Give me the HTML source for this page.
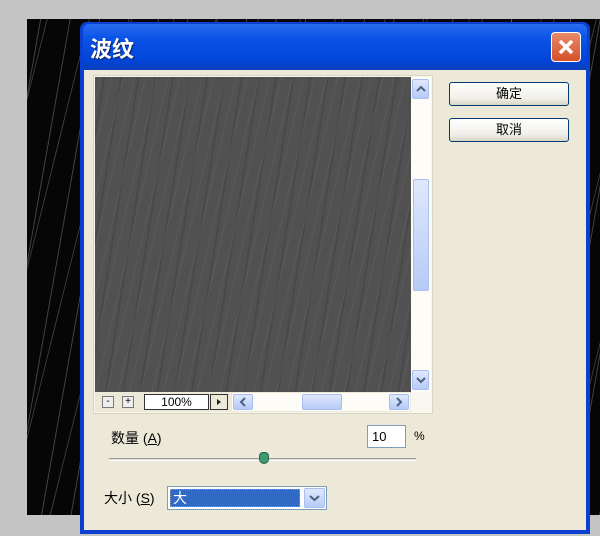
<!DOCTYPE html>
<html><head><meta charset="utf-8"><style>
*{margin:0;padding:0;box-sizing:border-box}
body{width:600px;height:536px;background:#c4c4c4;position:relative;overflow:hidden;font-family:"Liberation Sans","Noto Sans CJK SC",sans-serif;font-size:12px}
.abs{position:absolute}
#bgimg{left:27px;top:19px;width:573px;height:496px;background:
repeating-linear-gradient(100deg,transparent 0 13px,rgba(200,200,200,.3) 13px 14px,transparent 14px 29px),
repeating-linear-gradient(104deg,transparent 0 19px,rgba(255,255,255,.2) 19px 20px,transparent 20px 41px),#060606}
#dlg{left:80px;top:22px;width:510px;height:512px;background:#0a3fd0;border-radius:7px 7px 0 0}
#title{left:83px;top:24px;width:504px;height:46px;background:linear-gradient(#2a6cf0,#0a54e6 30%,#0245d8 80%,#0a3fb8);border-radius:6px 6px 0 0}
#title span{position:absolute;left:7px;top:8px;color:#fff;font-size:22px;font-weight:bold;text-shadow:1px 1px 1px #0a2060}
#close{left:551px;top:32px;width:30px;height:30px;background:linear-gradient(#e88a6a,#d4502a);border:1px solid #fff;border-radius:4px}
#body{left:84px;top:70px;width:502px;height:460px;background:#ece9d8}
#pv{left:93px;top:75px;width:340px;height:339px;background:#f8f6ee;border:1px solid #d8d4c0}
#img{left:95px;top:77px;width:316px;height:316px;background:
repeating-linear-gradient(103deg,transparent 0 5px,rgba(110,110,110,.3) 5px 6px,transparent 6px 11px),
repeating-linear-gradient(99deg,transparent 0 8px,rgba(50,50,50,.25) 8px 10px,transparent 10px 17px),#515151}
.sb{background:#fdfcf7}
.btnx{background:linear-gradient(#dfe8fd,#b7cbf7);border:1px solid #a9bff0;border-radius:2px}
.btn{left:449px;width:120px;height:24px;border:1px solid #003c74;border-radius:3px;background:linear-gradient(#fff,#f0efe8 70%,#d8d5c8);text-align:center;line-height:22px;font-size:13px}
</style></head><body>
<div id="bgimg" class="abs"></div>
<div id="dlg" class="abs"></div>
<div id="title" class="abs"><span>波纹</span></div>
<div id="close" class="abs"><svg width="28" height="28"><path d="M8 8L20 20M20 8L8 20" stroke="#fff" stroke-width="3.5"/></svg></div>
<div id="body" class="abs"></div>
<div id="pv" class="abs"></div>
<div id="img" class="abs"></div>
<div class="abs sb" style="left:411px;top:77px;width:20px;height:315px"></div>
<div class="abs btnx" style="left:412px;top:79px;width:17px;height:20px"><svg width="15" height="18"><path d="M4 11l4-4 4 4" stroke="#4d6185" stroke-width="2" fill="none"/></svg></div>
<div class="abs btnx" style="left:413px;top:179px;width:16px;height:112px"></div>
<div class="abs btnx" style="left:412px;top:370px;width:17px;height:20px"><svg width="15" height="18"><path d="M4 7l4 4 4-4" stroke="#4d6185" stroke-width="2" fill="none"/></svg></div>
<div class="abs sb" style="left:95px;top:392px;width:316px;height:20px;background:#ece9d8"></div>
<div class="abs" style="left:102px;top:396px;width:12px;height:12px;border:1px solid #777;background:#eee;font-size:10px;line-height:9px;text-align:center">-</div>
<div class="abs" style="left:122px;top:396px;width:12px;height:12px;border:1px solid #777;background:#eee;font-size:10px;line-height:9px;text-align:center">+</div>
<div class="abs" style="left:144px;top:394px;width:65px;height:16px;border:1px solid #333;background:#fff;text-align:center;line-height:14px;font-size:12px">100%</div>
<div class="abs" style="left:210px;top:394px;width:18px;height:16px;border:1px solid #333;background:#ece9d8"><svg width="16" height="14"><path d="M6 4l4 3-4 3z" fill="#222"/></svg></div>
<div class="abs sb" style="left:232px;top:393px;width:178px;height:18px"></div>
<div class="abs btnx" style="left:233px;top:394px;width:20px;height:16px"><svg width="18" height="14"><path d="M11 3l-4 4 4 4" stroke="#4d6185" stroke-width="2" fill="none"/></svg></div>
<div class="abs btnx" style="left:302px;top:394px;width:40px;height:16px"></div>
<div class="abs btnx" style="left:389px;top:394px;width:20px;height:16px"><svg width="18" height="14"><path d="M7 3l4 4-4 4" stroke="#4d6185" stroke-width="2" fill="none"/></svg></div>
<div class="abs btn" style="top:82px">确定</div>
<div class="abs btn" style="top:118px">取消</div>
<div class="abs" style="left:111px;top:428px;font-size:14px">数量 (<u>A</u>)</div>
<div class="abs" style="left:367px;top:425px;width:39px;height:23px;border:1px solid #7f9db9;background:#fff;padding-left:4px;line-height:21px;font-size:13px">10</div>
<div class="abs" style="left:414px;top:429px;font-size:12px">%</div>
<div class="abs" style="left:109px;top:458px;width:307px;height:3px;border-top:1px solid #999;border-bottom:1px solid #fff;background:#ddd"></div>
<div class="abs" style="left:259px;top:452px;width:10px;height:12px;background:#3a9a70;border-radius:4px 4px 5px 5px;border:1px solid #2a6048"></div>
<div class="abs" style="left:104px;top:488px;font-size:14px">大小 (<u>S</u>)</div>
<div class="abs" style="left:167px;top:486px;width:160px;height:24px;border:1px solid #7f9db9;background:#fff"></div>
<div class="abs" style="left:170px;top:489px;width:130px;height:18px;background:#316ac5;border:1px dotted #999;color:#fff;font-size:14px;line-height:16px;padding-left:2px">大</div>
<div class="abs btnx" style="left:304px;top:488px;width:21px;height:20px"><svg width="19" height="18"><path d="M5 7l4.5 4 4.5-4" stroke="#4d6185" stroke-width="2" fill="none"/></svg></div>
</body></html>
